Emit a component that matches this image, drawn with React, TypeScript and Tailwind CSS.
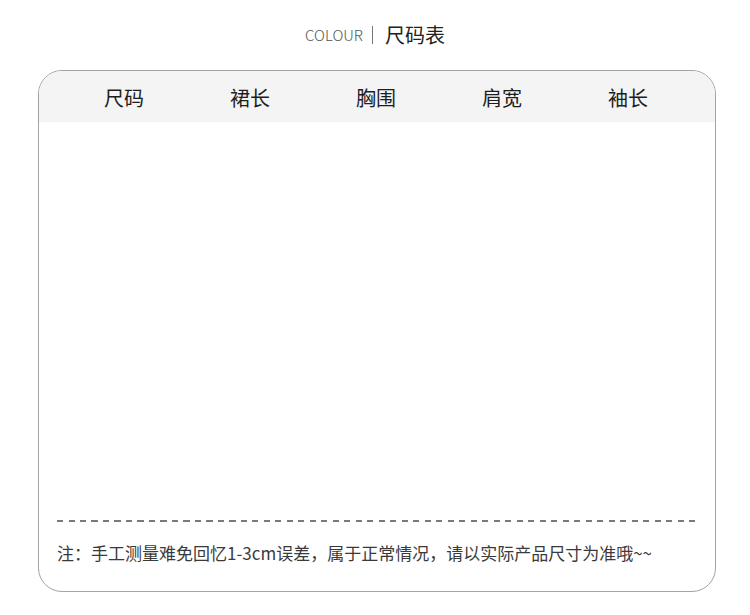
const columns = ["尺码", "裙长", "胸围", "肩宽", "袖长"];

export default function App() {
  return (
    <main
      className="h-[615px] w-[750px] bg-white text-[#222]"
      style={{ fontFamily: '"Noto Sans CJK SC", "Noto Sans", sans-serif' }}
    >
      <header className="flex h-[70px] items-center justify-center pb-[1px]">
        <span className="text-[15px] font-light leading-none text-[#555]">COLOUR</span>
        <span className="ml-[9px] mr-[12px] h-[18px] w-px bg-[#777]" />
        <h1 className="text-[20px] leading-none text-[#222]">尺码表</h1>
      </header>

      <section className="ml-[38px] flex h-[522px] w-[678px] flex-col overflow-hidden rounded-[24px] border border-[#a3a3a3]">
        <div className="grid h-[51px] grid-cols-[repeat(5,126px)] items-center bg-[#f4f4f4] px-[22px] pt-[2px]">
          {columns.map((label) => (
            <span key={label} className="text-center text-[20px] leading-none text-[#1e1e1e]">
              {label}
            </span>
          ))}
        </div>

        <div className="h-[398px]" />

        <div className="px-[18px]">
          <div className="h-[1.5px] w-full bg-[repeating-linear-gradient(to_right,#7a7a7a_0px,#7a7a7a_6px,transparent_6px,transparent_11.5px)]" />
          <p className="mt-[19px] text-[17px] leading-[24px] text-[#3a3a3a]">
            注：手工测量难免回忆1-3cm误差，属于正常情况，请以实际产品尺寸为准哦~~
          </p>
        </div>
      </section>
    </main>
  );
}
